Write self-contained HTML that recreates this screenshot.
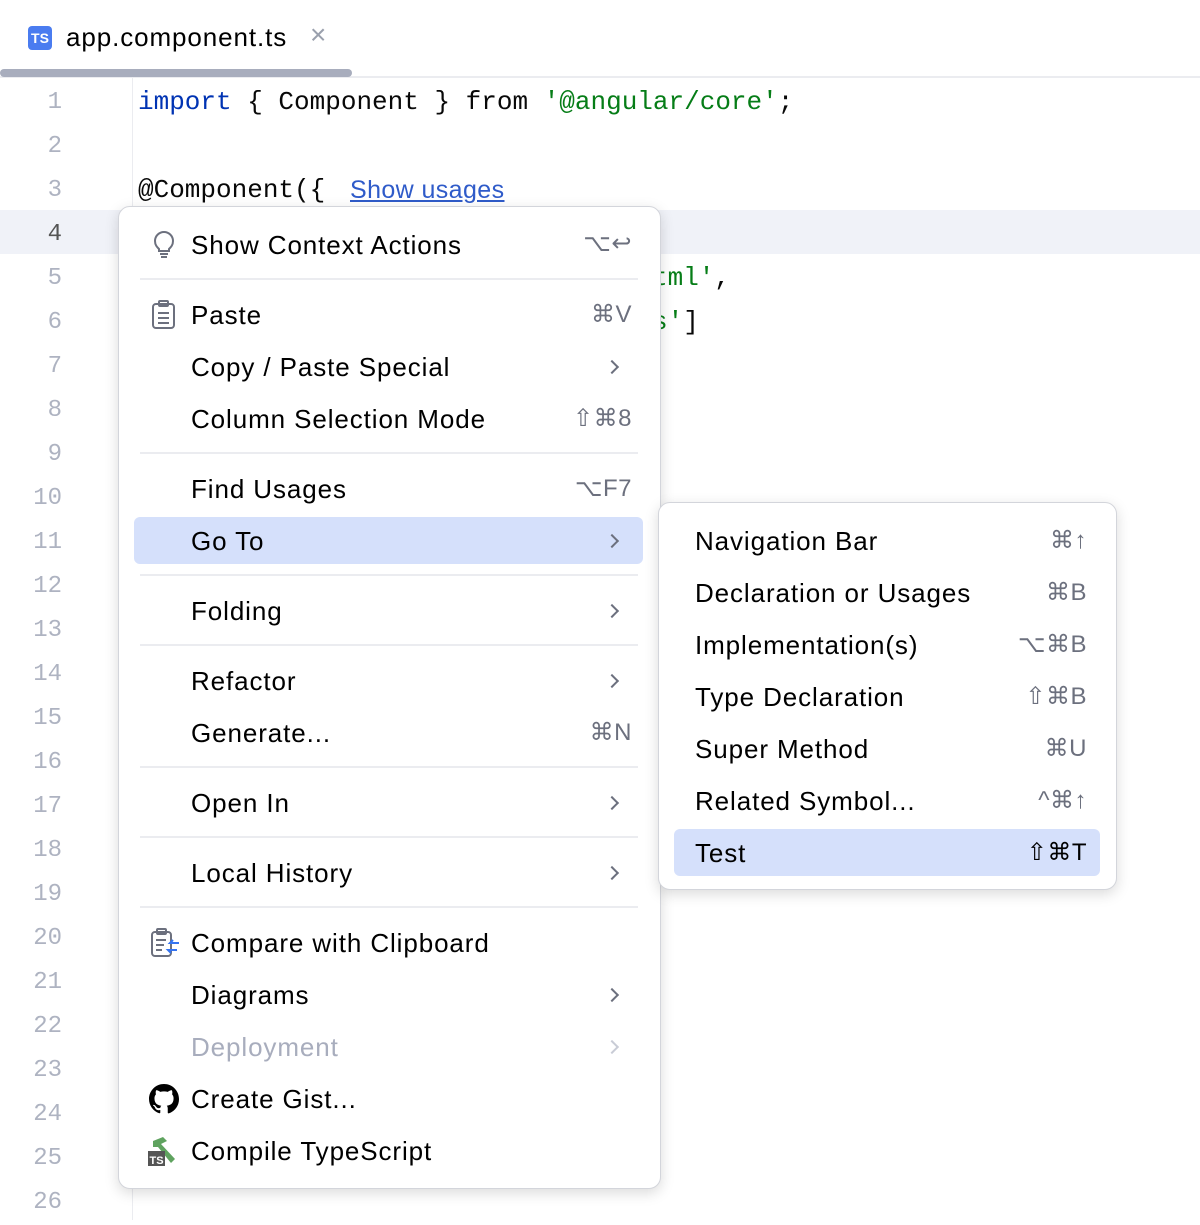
<!DOCTYPE html>
<html><head><meta charset="utf-8"><style>
*{margin:0;padding:0;box-sizing:border-box}
body{width:1200px;height:1220px;background:#fff;position:relative;overflow:hidden;font-family:"Liberation Sans",sans-serif;color:#000}
.a{position:absolute}
.ln{position:absolute;left:0;width:62px;text-align:right;font-family:"Liberation Mono",monospace;font-size:24px;color:#aeb3c1;line-height:44px}
.code{position:absolute;font-family:"Liberation Mono",monospace;font-size:26px;line-height:44px;white-space:pre;color:#080808}
.kw{color:#0033b3}.st{color:#067d17}
.menu{position:absolute;background:#fff;border:1px solid #d3d5db;border-radius:12px;box-shadow:0 4px 14px rgba(0,0,0,.15)}
.it{position:absolute;font-size:26px;letter-spacing:0.9px;line-height:30px;white-space:nowrap}
.sc{position:absolute;font-size:24px;line-height:30px;color:#6c707e;text-align:right;white-space:nowrap;letter-spacing:0.5px}
.sep{position:absolute;left:22px;right:22px;height:2px;background:#ebecf0}
.hl{position:absolute;background:#d5e0fb;border-radius:6px}
.ar{position:absolute;width:10px;height:10px;border-right:2px solid #6c707e;border-top:2px solid #6c707e;transform:rotate(45deg)}
</style></head><body>
<div class="a" style="left:28px;top:26px;width:24px;height:24px;background:#4a7cf0;border-radius:4px;color:#fff;font-size:14px;font-weight:bold;line-height:24px;text-align:center">TS</div>
<div class="a" style="left:66px;top:20px;font-size:26px;letter-spacing:0.9px;line-height:34px">app.component.ts</div>
<div class="a" style="left:310px;top:18px;font-size:28px;color:#9aa0ad;line-height:34px">×</div>
<div class="a" style="left:0;top:76px;width:1200px;height:2px;background:#ebecf0"></div>
<div class="a" style="left:0;top:69px;width:352px;height:8px;background:#a8adbd;border-radius:4px"></div>
<div class="a" style="left:0;top:210px;width:1200px;height:44px;background:#f0f2f8"></div>
<div class="a" style="left:132px;top:78px;width:1px;height:1142px;background:#ebecf0"></div>
<div class="ln" style="top:81px">1</div><div class="ln" style="top:125px">2</div><div class="ln" style="top:169px">3</div><div class="ln" style="top:213px;color:#555">4</div><div class="ln" style="top:257px">5</div><div class="ln" style="top:301px">6</div><div class="ln" style="top:345px">7</div><div class="ln" style="top:389px">8</div><div class="ln" style="top:433px">9</div><div class="ln" style="top:477px">10</div><div class="ln" style="top:521px">11</div><div class="ln" style="top:565px">12</div><div class="ln" style="top:609px">13</div><div class="ln" style="top:653px">14</div><div class="ln" style="top:697px">15</div><div class="ln" style="top:741px">16</div><div class="ln" style="top:785px">17</div><div class="ln" style="top:829px">18</div><div class="ln" style="top:873px">19</div><div class="ln" style="top:917px">20</div><div class="ln" style="top:961px">21</div><div class="ln" style="top:1005px">22</div><div class="ln" style="top:1049px">23</div><div class="ln" style="top:1093px">24</div><div class="ln" style="top:1137px">25</div><div class="ln" style="top:1181px">26</div>
<div class="code" style="left:138px;top:80px"><span class="kw">import</span> { Component } from <span class="st">'@angular/core'</span>;</div>
<div class="code" style="left:138px;top:168px">@Component({</div>
<div class="a" style="left:350px;top:174px;font-size:25px;letter-spacing:0.4px;line-height:32px;color:#2f5bc9;text-decoration:underline">Show usages</div>
<div class="code" style="left:652px;top:256px"><span class="st">tml'</span>,</div>
<div class="code" style="left:652px;top:300px"><span class="st">s'</span>]</div>
<div class="menu" style="left:118px;top:206px;width:543px;height:983px"></div>
<svg class="a" style="left:151px;top:230px" width="26" height="30" viewBox="0 0 26 30" fill="none" stroke="#6c707e" stroke-width="2"><path d="M8 19c-2-2-4-4-4-8a9 9 0 0 1 18 0c0 4-2 6-4 8v2H8z"/><path d="M9 24h8M10 27h6"/></svg>
<svg class="a" style="left:150px;top:300px" width="28" height="30" viewBox="0 0 28 30" fill="none" stroke="#6c707e" stroke-width="2"><rect x="3" y="4" width="21" height="24" rx="3"/><rect x="9" y="1" width="9" height="5" rx="1"/><path d="M8 13h11M8 18h11M8 23h11"/></svg>
<svg class="a" style="left:149px;top:928px" width="32" height="32" viewBox="0 0 32 32" fill="none" stroke-width="2"><rect x="3" y="4" width="19" height="24" rx="3" stroke="#6c707e"/><rect x="8" y="1" width="9" height="5" rx="1" stroke="#6c707e"/><path d="M7 12h10M7 17h8M7 22h6" stroke="#6c707e"/><path d="M30 15h-9l3-3M28 22h-9l3 3" stroke="#3574f0"/></svg>
<svg class="a" style="left:149px;top:1084px" width="30" height="30" viewBox="0 0 16 16"><path fill="#000" d="M8 0C3.580 0 0 3.580 0 8c0 3.540 2.290 6.530 5.470 7.590.4.07.55-.17.55-.38v-1.330c-2.230.48-2.700-1.070-2.700-1.070-.36-.92-.89-1.170-.89-1.170-.73-.5.05-.49.05-.49.81.06 1.230.83 1.230.83.72 1.230 1.880.87 2.340.67.07-.52.28-.87.51-1.070-1.780-.2-3.650-.89-3.650-3.950 0-.87.31-1.590.82-2.150-.08-.2-.36-1.020.08-2.120 0 0 .67-.21 2.200.82a7.600 7.600 0 0 1 4 0c1.530-1.040 2.200-.82 2.200-.82.44 1.100.16 1.920.08 2.120.51.56.82 1.270.82 2.150 0 3.070-1.870 3.750-3.650 3.950.29.25.54.73.54 1.480v2.200c0 .21.15.46.55.38A8.010 8.010 0 0 0 16 8c0-4.420-3.580-8-8-8z"/></svg>
<svg class="a" style="left:147px;top:1135px" width="32" height="32" viewBox="0 0 32 32"><path d="M6 6l10-4 4 4-6 3 14 15-4 4L11 12l-5 0z" fill="#5fa35f"/><rect x="1" y="16" width="17" height="15" fill="#555"/><text x="9.5" y="29" font-size="11" font-weight="bold" fill="#fff" text-anchor="middle" font-family="Liberation Sans">TS</text></svg>
<div class="sep" style="left:140px;width:498px;top:278px"></div>
<div class="sep" style="left:140px;width:498px;top:452px"></div>
<div class="sep" style="left:140px;width:498px;top:574px"></div>
<div class="sep" style="left:140px;width:498px;top:644px"></div>
<div class="sep" style="left:140px;width:498px;top:766px"></div>
<div class="sep" style="left:140px;width:498px;top:836px"></div>
<div class="sep" style="left:140px;width:498px;top:906px"></div>
<div class="hl" style="left:134px;top:517px;width:509px;height:47px"></div>
<div class="it" style="left:191px;top:230px">Show Context Actions</div><div class="sc" style="right:568px;top:229px">⌥↩</div>
<div class="it" style="left:191px;top:300px">Paste</div><div class="sc" style="right:568px;top:300px">⌘V</div>
<div class="it" style="left:191px;top:352px">Copy / Paste Special</div><div class="ar" style="left:607px;top:362px"></div>
<div class="it" style="left:191px;top:404px">Column Selection Mode</div><div class="sc" style="right:568px;top:404px">⇧⌘8</div>
<div class="it" style="left:191px;top:474px">Find Usages</div><div class="sc" style="right:568px;top:474px">⌥F7</div>
<div class="it" style="left:191px;top:526px">Go To</div><div class="ar" style="left:607px;top:536px"></div>
<div class="it" style="left:191px;top:596px">Folding</div><div class="ar" style="left:607px;top:606px"></div>
<div class="it" style="left:191px;top:666px">Refactor</div><div class="ar" style="left:607px;top:676px"></div>
<div class="it" style="left:191px;top:718px">Generate...</div><div class="sc" style="right:568px;top:718px">⌘N</div>
<div class="it" style="left:191px;top:788px">Open In</div><div class="ar" style="left:607px;top:798px"></div>
<div class="it" style="left:191px;top:858px">Local History</div><div class="ar" style="left:607px;top:868px"></div>
<div class="it" style="left:191px;top:928px">Compare with Clipboard</div>
<div class="it" style="left:191px;top:980px">Diagrams</div><div class="ar" style="left:607px;top:990px"></div>
<div class="it" style="left:191px;top:1032px;color:#a8adbd">Deployment</div><div class="ar" style="left:607px;top:1042px;border-color:#c9ccd6"></div>
<div class="it" style="left:191px;top:1084px">Create Gist...</div>
<div class="it" style="left:191px;top:1136px">Compile TypeScript</div>
<div class="menu" style="left:658px;top:502px;width:459px;height:388px"></div>
<div class="hl" style="left:674px;top:829px;width:426px;height:47px"></div>
<div class="it" style="left:695px;top:526px">Navigation Bar</div><div class="sc" style="right:113px;top:526px">⌘↑</div>
<div class="it" style="left:695px;top:578px">Declaration or Usages</div><div class="sc" style="right:113px;top:578px">⌘B</div>
<div class="it" style="left:695px;top:630px">Implementation(s)</div><div class="sc" style="right:113px;top:630px">⌥⌘B</div>
<div class="it" style="left:695px;top:682px">Type Declaration</div><div class="sc" style="right:113px;top:682px">⇧⌘B</div>
<div class="it" style="left:695px;top:734px">Super Method</div><div class="sc" style="right:113px;top:734px">⌘U</div>
<div class="it" style="left:695px;top:786px">Related Symbol...</div><div class="sc" style="right:113px;top:786px">^⌘↑</div>
<div class="it" style="left:695px;top:838px">Test</div><div class="sc" style="right:113px;top:838px;color:#000">⇧⌘T</div>
</body></html>
